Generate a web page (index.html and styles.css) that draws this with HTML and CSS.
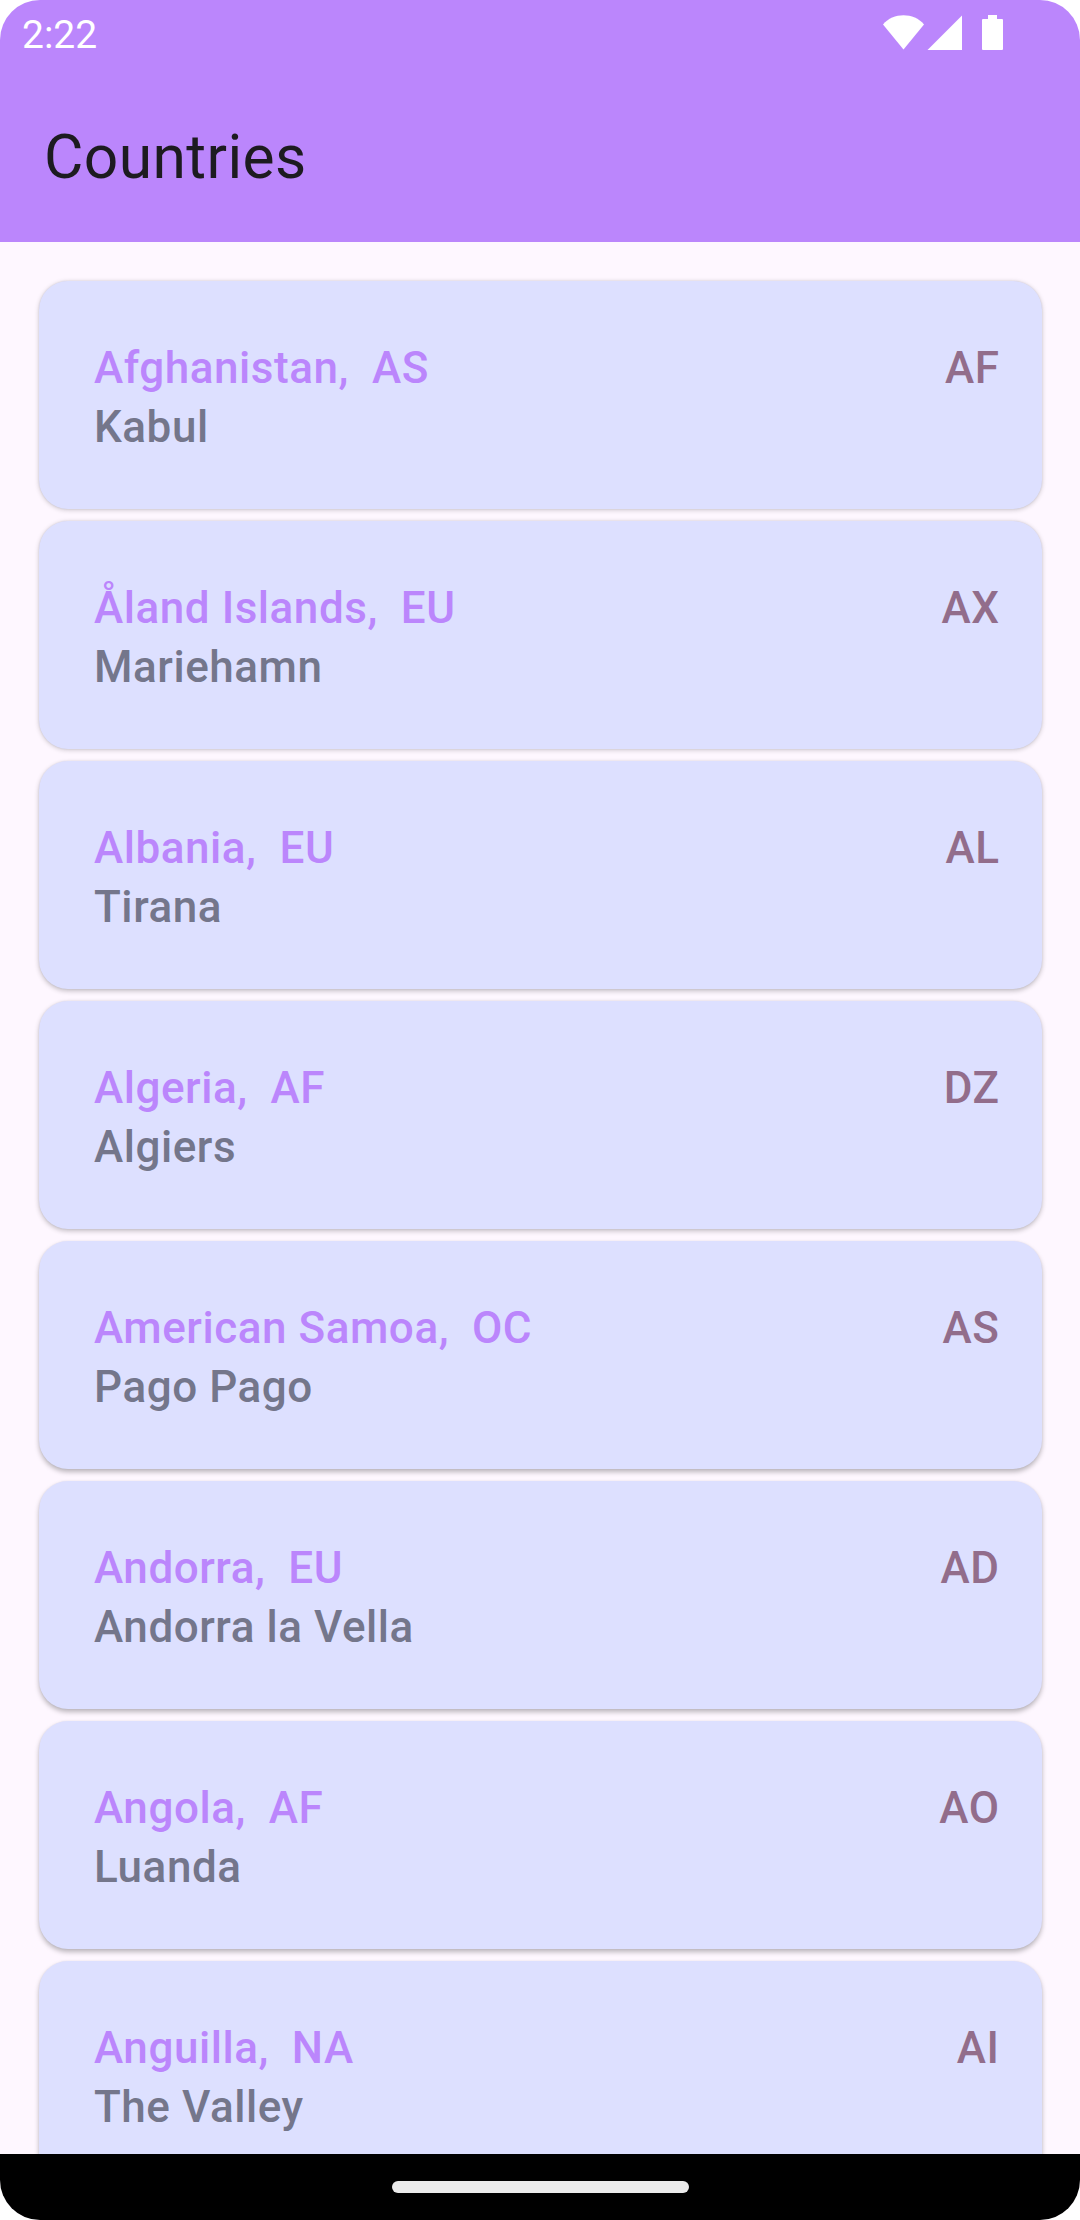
FILE: index.html
```html
<!DOCTYPE html>
<html lang="en">
<head>
<meta charset="utf-8">
<title>Countries</title>
<link rel="stylesheet" href="styles.css">
</head>
<body>
<div class="phone">
  <header class="header">
    <div class="status">
      <span class="time">2:22</span>
      <svg class="status-icons" width="122" height="36" viewBox="0 0 122 36" fill="#fff">
        <path d="M0 9.500C10-2.700 31-2.700 41 9.500L20.500 34.500Z"/>
        <path d="M44.500 35L79 .5V35Z"/>
        <path d="M105 0h9v4h5a1 1 0 0 1 1 1v29a1 1 0 0 1-1 1H100a1 1 0 0 1-1-1V5a1 1 0 0 1 1-1h5z"/>
      </svg>
    </div>
    <h1 class="title">Countries</h1>
  </header>
  <main class="list">
    <article class="card"><div class="info"><p class="name">Afghanistan,&nbsp; AS</p><p class="capital">Kabul</p></div><span class="code">AF</span></article>
    <article class="card"><div class="info"><p class="name">Åland Islands,&nbsp; EU</p><p class="capital">Mariehamn</p></div><span class="code">AX</span></article>
    <article class="card"><div class="info"><p class="name">Albania,&nbsp; EU</p><p class="capital">Tirana</p></div><span class="code">AL</span></article>
    <article class="card"><div class="info"><p class="name">Algeria,&nbsp; AF</p><p class="capital">Algiers</p></div><span class="code">DZ</span></article>
    <article class="card"><div class="info"><p class="name">American Samoa,&nbsp; OC</p><p class="capital">Pago Pago</p></div><span class="code">AS</span></article>
    <article class="card"><div class="info"><p class="name">Andorra,&nbsp; EU</p><p class="capital">Andorra la Vella</p></div><span class="code">AD</span></article>
    <article class="card"><div class="info"><p class="name">Angola,&nbsp; AF</p><p class="capital">Luanda</p></div><span class="code">AO</span></article>
    <article class="card"><div class="info"><p class="name">Anguilla,&nbsp; NA</p><p class="capital">The Valley</p></div><span class="code">AI</span></article>
  </main>
  <nav class="navbar"><div class="handle"></div></nav>
</div>
</body>
</html>
```
FILE: styles.css
```css
* { box-sizing: border-box; }
body { margin: 0; background: #fff; font-family: Roboto, sans-serif; }
h1, p { margin: 0; }

.phone {
  display: flex;
  flex-direction: column;
  width: 1080px;
  height: 2220px;
  overflow: hidden;
  border-radius: 40px;
  background: #fef7ff;
}

.header {
  display: flex;
  flex: none;
  flex-direction: column;
  height: 242px;
  background: #bb86fc;
}

.status {
  display: flex;
  justify-content: space-between;
  align-items: flex-start;
  height: 66px;
  padding: 15px 75px 0 22px;
}

.time {
  color: #fff;
  font-size: 39px;
  line-height: 40px;
}

.title {
  padding: 53px 44px 0;
  color: #1d1b20;
  font-size: 60.5px;
  font-weight: 400;
  line-height: 77px;
  letter-spacing: .42px;
}

.list {
  display: flex;
  flex: 1;
  flex-direction: column;
  gap: 12px;
  min-height: 0;
  padding: 39px 38.5px 0;
  overflow: hidden;
}

.card {
  display: flex;
  flex: none;
  justify-content: space-between;
  height: 228px;
  padding: 58px 42px 0 55.5px;
  border-radius: 29px;
  background: #dde0ff;
  box-shadow: 0 1px 5px rgba(0, 0, 0, .2), 0 0 2px rgba(0, 0, 0, .1);
  font-size: 44px;
  font-weight: 500;
  line-height: 59px;
  letter-spacing: .55px;
}

/* Shadows deepen towards the bottom of the screen. */
.card:nth-child(n + 3) { box-shadow: 0 2px 5px rgba(0, 0, 0, .24), 0 0 2px rgba(0, 0, 0, .08); }
.card:nth-child(n + 5) { box-shadow: 0 3px 5px rgba(0, 0, 0, .27), 0 0 2px rgba(0, 0, 0, .06); }

.name { color: #bb86fc; }
.capital { color: #74768b; }
.code { color: #926d8b; }

.navbar {
  display: flex;
  flex: none;
  justify-content: center;
  height: 66px;
  padding-top: 27px;
  background: #000;
}

.handle {
  width: 297px;
  height: 12px;
  border-radius: 6px;
  background: #ebebeb;
}
```
